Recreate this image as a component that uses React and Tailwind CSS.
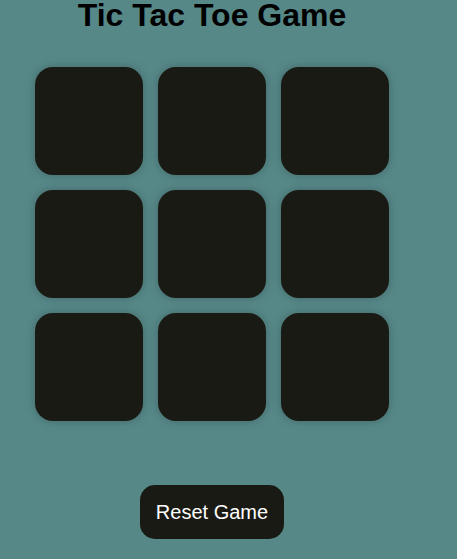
import React from 'react';

const cells = Array.from({ length: 9 }, (_, i) => i);

export default function App() {
  return (
    <div
      className="min-h-[559px] bg-[#578888]"
      style={{ fontFamily: '"Liberation Sans", Arial, sans-serif' }}
    >
      <div className="w-[424px] flex flex-col items-center">
        {/* Title */}
        <h1 className="text-[32px] leading-[30px] font-bold text-black">
          Tic Tac Toe Game
        </h1>

        {/* Board */}
        <div className="mt-[37px] grid grid-cols-[108px_108px_108px] gap-[15px]">
          {cells.map((i) => (
            <button
              key={i}
              className="w-[108px] h-[108px] rounded-[18px] bg-[#1a1a14] shadow-[0_0_10px_rgba(0,0,0,0.25)]"
            />
          ))}
        </div>

        {/* Reset */}
        <button className="mt-[64px] w-[144px] h-[54px] rounded-[15px] bg-[#1a1a14] text-white text-[20px]">
          Reset Game
        </button>
      </div>
    </div>
  );
}
